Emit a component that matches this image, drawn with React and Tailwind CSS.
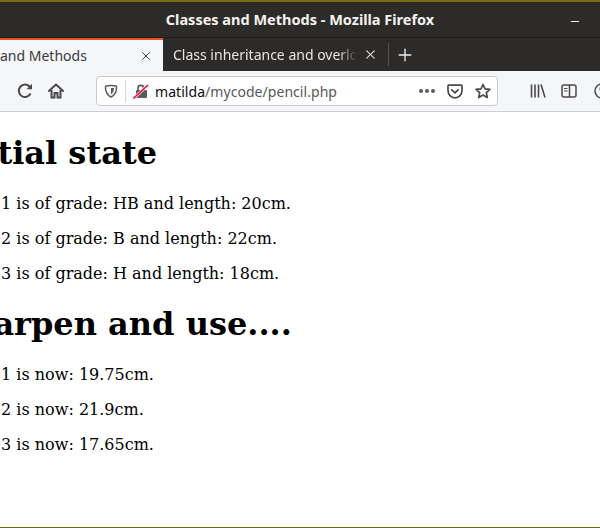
import { X, Plus } from 'lucide-react'

const UI_FONT = "font-['Noto_Sans',sans-serif]"

function ReloadIcon() {
    return (
        <svg width="16" height="16" viewBox="0 0 16 16" fill="none" stroke="#4a4a4f" strokeWidth="2">
            <path d="M13.6 10.5 A6.2 6.2 0 1 1 12.6 3.6 L14 5" />
            <path d="M15 0.8 V6.2 H9.6 Z" fill="#4a4a4f" stroke="none" />
        </svg>
    )
}

function HomeIcon() {
    return (
        <svg width="16" height="16" viewBox="0 0 16 16" fill="none" stroke="#4a4a4f" strokeWidth="2">
            <path d="M1 8 L8 1.5 L15 8" strokeLinejoin="round" strokeLinecap="round" />
            <path d="M3.5 7 V14.5 H6.5 V10 H9.5 V14.5 H12.5 V7" />
        </svg>
    )
}

function ShieldIcon() {
    return (
        <svg width="14" height="14" viewBox="0 0 14 14" fill="none">
            <path d="M1.5 2.2 C4 1.4 10 1.4 12.5 2.2 C12.8 7 11 11 7 13 C3 11 1.2 7 1.5 2.2 Z" stroke="#5b5b60" strokeWidth="1.5" />
            <path d="M7 4 H10 C10 7 9 9 7 10.5 Z" fill="#5b5b60" />
        </svg>
    )
}

function LockIcon() {
    return (
        <svg width="16" height="16" viewBox="0 0 16 16" fill="none">
            <path d="M5 7 V5 C5 1.5 10.5 1.5 10.5 5 V7" stroke="#5b5b60" strokeWidth="1.6" />
            <rect x="3" y="7" width="11" height="8" rx="1" fill="#5b5b60" />
            <path d="M1 15 L15 2" stroke="#fff" strokeWidth="3" />
            <path d="M0.5 15.5 L15 2" stroke="#ff0039" strokeWidth="1.6" />
        </svg>
    )
}

function PocketIcon() {
    return (
        <svg width="16" height="15" viewBox="0 0 16 15" fill="none" stroke="#4a4a4f" strokeWidth="1.7">
            <path d="M1.8 1.2 H14.2 C14.7 1.2 15 1.5 15 2 V6.5 C15 10.5 12 13.8 8 13.8 C4 13.8 1 10.5 1 6.5 V2 C1 1.5 1.3 1.2 1.8 1.2 Z" />
            <path d="M4.8 5.8 L8 8.8 L11.2 5.8" strokeLinecap="round" strokeLinejoin="round" />
        </svg>
    )
}

function StarIcon() {
    return (
        <svg width="16" height="16" viewBox="0 0 16 16" fill="none" stroke="#4a4a4f" strokeWidth="1.7" strokeLinejoin="round">
            <path d="M8 1.5 L10 5.8 L14.9 6.4 L11.3 9.7 L12.3 14.5 L8 12.1 L3.7 14.5 L4.7 9.7 L1.1 6.4 L6 5.8 Z" />
        </svg>
    )
}

function LibraryIcon() {
    return (
        <svg width="16" height="16" viewBox="0 0 16 16" fill="none" stroke="#4a4a4f" strokeWidth="1.6">
            <path d="M1.5 1.5 V14.5 M5 1.5 V14.5 M8.5 1.5 V14.5 M11 1.5 L15 14.5" />
        </svg>
    )
}

function SidebarIcon() {
    return (
        <svg width="16" height="16" viewBox="0 0 16 16" fill="none" stroke="#4a4a4f" strokeWidth="1.5">
            <rect x="1" y="2" width="14" height="12" rx="2" />
            <path d="M8.5 2 V14" />
            <path d="M3 5.5 H6.5 M3 8 H6.5" strokeWidth="1.2" />
        </svg>
    )
}

function AccountIcon() {
    return (
        <svg width="16" height="16" viewBox="0 0 16 16" fill="none" stroke="#4a4a4f" strokeWidth="1.5" className="shrink-0">
            <circle cx="8" cy="8" r="7" />
            <circle cx="8" cy="6" r="2.5" fill="#4a4a4f" stroke="none" />
        </svg>
    )
}

function Line({ children }) {
    return <p className="mb-4 text-[16px] leading-[19px] whitespace-nowrap">{children}</p>
}

export default function App() {
    return (
        <div className="h-[528px] w-[600px] overflow-hidden flex flex-col bg-white border-b border-[#6f5f1b]">
            <div className={`${UI_FONT} h-[37px] shrink-0 bg-[#2d2b2a] border-t-2 border-[#7a6a14] flex items-center justify-center relative`}>
                <span className="text-[14.5px] font-bold text-[#f4f2f0]">Classes and Methods - Mozilla Firefox</span>
                <div className="absolute left-[571px] top-[19px] w-[8px] h-px bg-[#f0f0f0]" />
            </div>

            <div className={`${UI_FONT} h-[34px] shrink-0 bg-[#2d2b2a] border-t border-[#1c1b1a] flex items-stretch`}>
                <div className="w-[163px] bg-[#f5f6f7] border-t-2 border-[#e95420] flex items-center justify-between overflow-hidden pr-[10px]">
                    <span className="text-[14px] text-[#3a3a3c] whitespace-nowrap">and Methods</span>
                    <X size={14} strokeWidth={1.7} className="text-[#444]" />
                </div>
                <div className="w-[226px] flex items-center pl-[10px] pr-[10px] border-r border-[#55534f] my-[5px]">
                    <span className="text-[14px] text-[#e6e4e2] whitespace-nowrap overflow-hidden w-[185px] mask-r-from-[90%] mask-r-to-100%">Class inheritance and overlo</span>
                    <X size={15} strokeWidth={1.7} className="text-[#ddd] ml-[6px]" />
                </div>
                <div className="flex items-center pl-[6px]">
                    <Plus size={20} strokeWidth={1.6} className="text-[#eee]" />
                </div>
            </div>

            <div className={`${UI_FONT} h-[41px] shrink-0 bg-[#f5f6f7] border-b border-[#cfcfd1] flex items-center overflow-hidden`}>
                <div className="ml-[17px]"><ReloadIcon /></div>
                <div className="ml-[15px]"><HomeIcon /></div>
                <div className="ml-[32px] w-[402px] h-[30px] shrink-0 bg-white border border-[#c9c9cc] rounded-[4px] flex items-center">
                    <div className="ml-[7px]"><ShieldIcon /></div>
                    <div className="w-px h-[22px] bg-[#d4d4d6] ml-[7px]" />
                    <div className="ml-[7px]"><LockIcon /></div>
                    <span className="ml-[6px] text-[14px] tracking-[0.05px] text-[#58585c] whitespace-nowrap"><span className="text-[#0c0c0d]">matilda</span>/mycode/pencil.php</span>
                    <div className="ml-auto flex items-center">
                        <div className="flex gap-[2px]">
                            <span className="w-[4px] h-[4px] rounded-full bg-[#5b5b60]" />
                            <span className="w-[4px] h-[4px] rounded-full bg-[#5b5b60]" />
                            <span className="w-[4px] h-[4px] rounded-full bg-[#5b5b60]" />
                        </div>
                        <div className="ml-[12px]"><PocketIcon /></div>
                        <div className="ml-[12px] mr-[6px]"><StarIcon /></div>
                    </div>
                </div>
                <div className="ml-[32px]"><LibraryIcon /></div>
                <div className="ml-[15px]"><SidebarIcon /></div>
                <div className="ml-[17px]"><AccountIcon /></div>
            </div>

            <div className="flex-1 overflow-hidden font-['DejaVu_Serif',serif] text-black -ml-[53px] pt-[22px]">
                <h1 className="text-[32px] leading-[38px] font-bold mb-[22px] whitespace-nowrap">Initial state</h1>
                <Line>Pencil 1 is of grade: HB and length: 20cm.</Line>
                <Line>Pencil 2 is of grade: B and length: 22cm.</Line>
                <Line>Pencil 3 is of grade: H and length: 18cm.</Line>
                <h1 className="text-[32px] leading-[38px] font-bold mt-[22px] mb-[22px] whitespace-nowrap">Sharpen and use....</h1>
                <Line>Pencil 1 is now: 19.75cm.</Line>
                <Line>Pencil 2 is now: 21.9cm.</Line>
                <Line>Pencil 3 is now: 17.65cm.</Line>
            </div>
        </div>
    )
}
